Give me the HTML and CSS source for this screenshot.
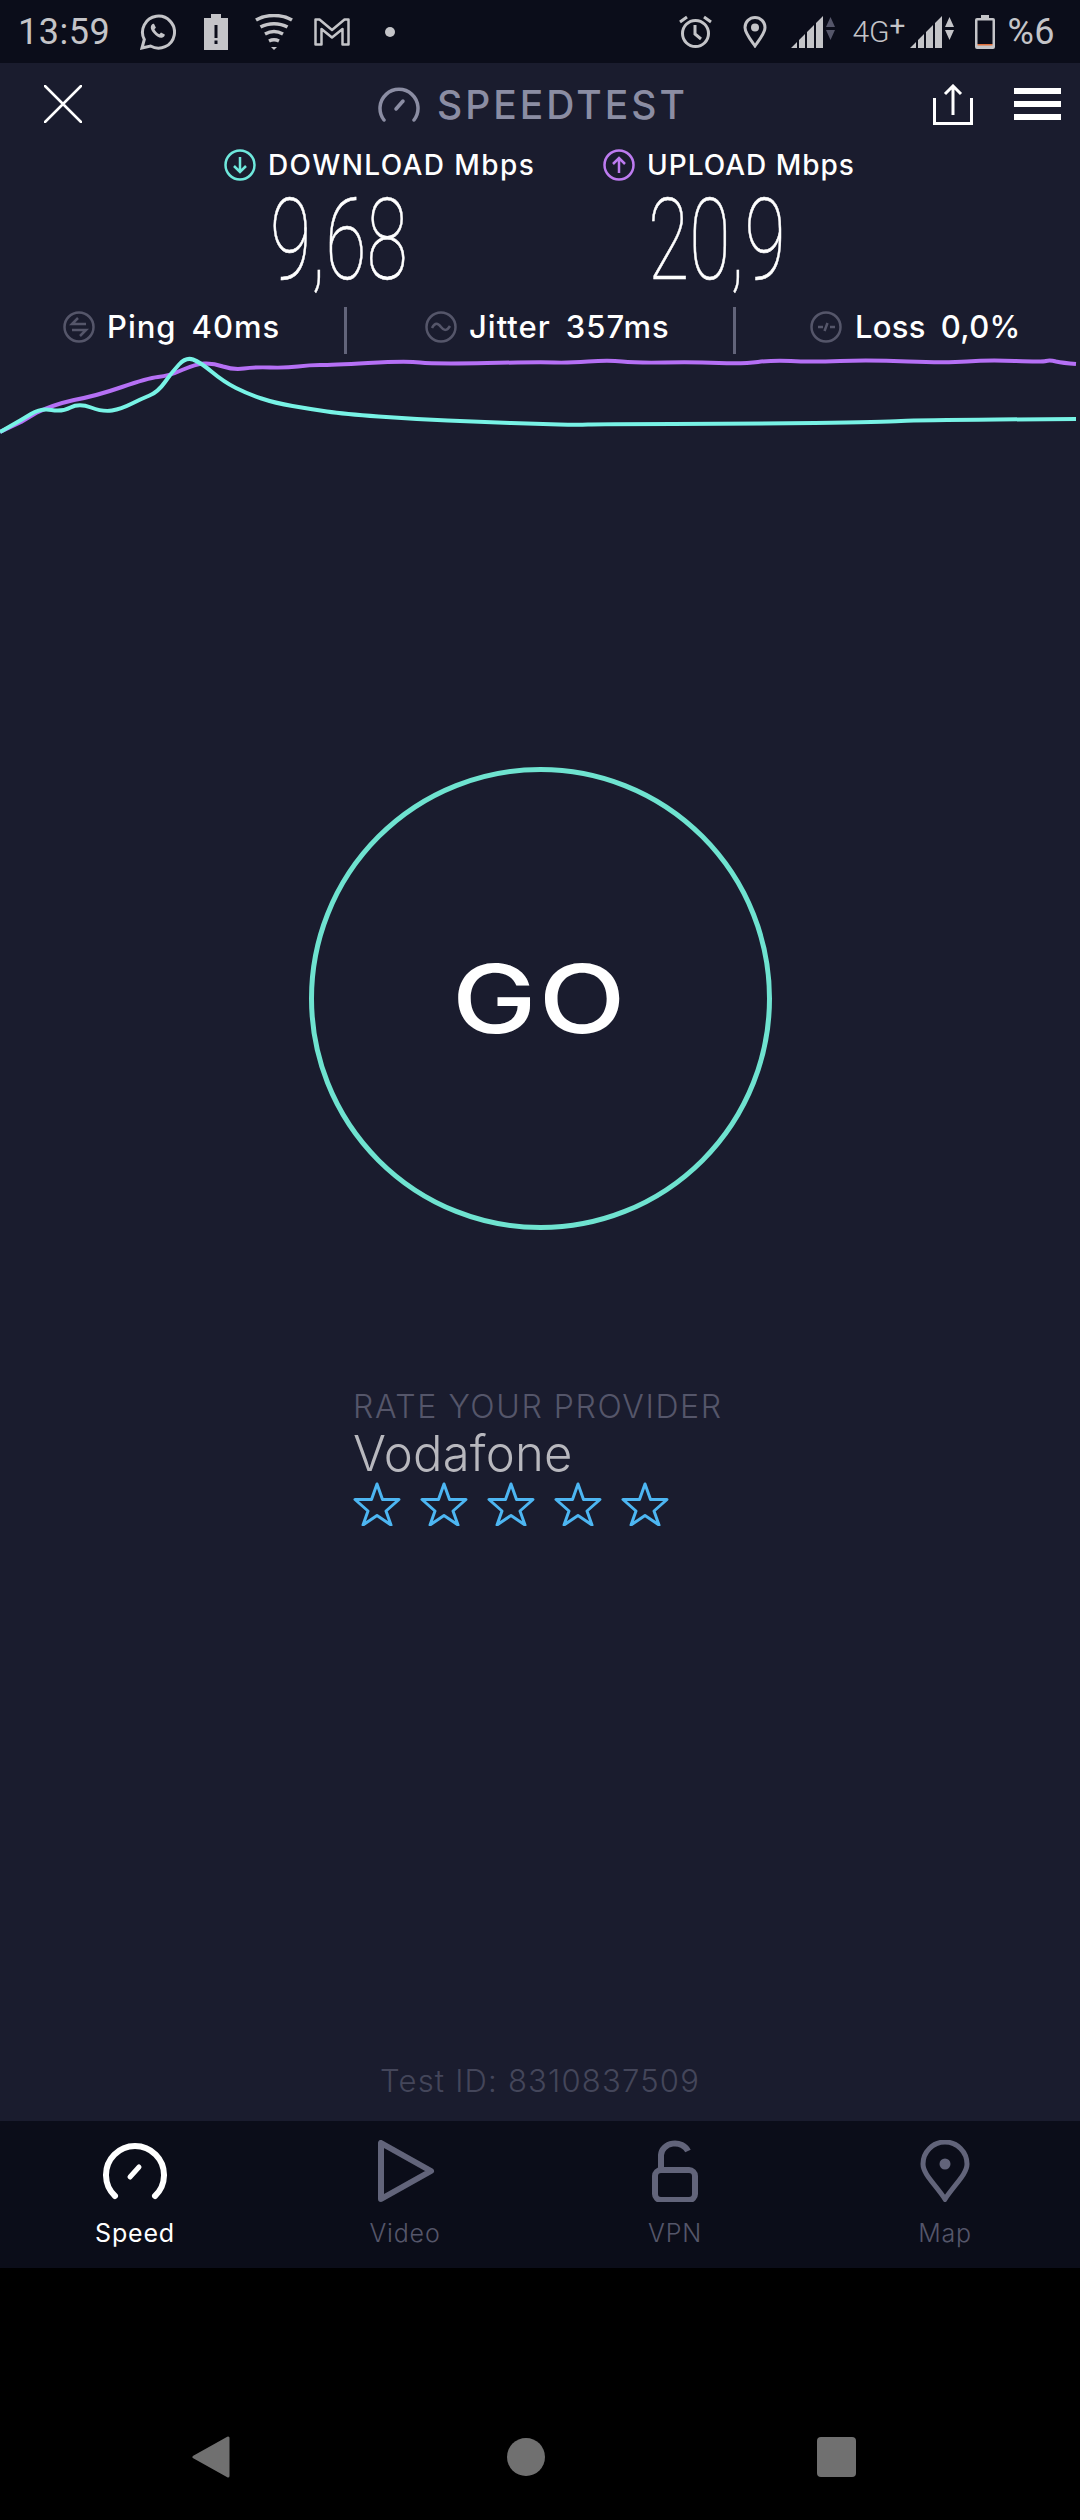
FILE: index.html
```html
<!DOCTYPE html>
<html lang="en">
<head>
    <meta charset="UTF-8">
    <title>Speedtest</title>
    <link rel="stylesheet" href="styles.css">
</head>
<body>
    <div class="status-bar">
        <span class="clock">13:59</span>
        <svg class="st-whatsapp" viewBox="0 0 36 36" fill="none" stroke="#c4c4c8" stroke-width="3"><path d="M2 34l2.300-8.500A16 16 0 1 1 10.500 32z"/><path d="M12 10.500c-2 2-1.500 5 1.500 8.500s6.500 5.500 9 4.500c1.500-.6 2.500-2 2.300-3l-3.800-2-1.600 1.800c-2-.8-4-2.800-5-5l1.500-1.600-1.800-3.800c-.8-.4-1.500-.4-2.100.6z" fill="#c4c4c8" stroke="none"/></svg>
        <svg class="st-alert" viewBox="0 0 24 36"><path fill="#c4c4c8" d="M0 4h7V0h10v4h7v32H0z"/><path fill="#0b0d1a" d="M10.500 11h3v13h-3zM10.500 26.500h3v3.500h-3z"/></svg>
        <svg class="st-wifi" viewBox="0 0 38 36" fill="none" stroke="#c4c4c8" stroke-width="3.500"><path d="M1 6c10-6 26-6 36 0"/><path d="M5.500 13c8-4.500 19-4.500 27 0"/><path d="M10 20c5.500-3 12.500-3 18 0"/><path d="M14 27c3-1.500 7-1.500 10 0"/><path d="M16 33h6l-3 3z" fill="#c4c4c8" stroke="none"/></svg>
        <svg class="st-gmail" viewBox="0 0 36 28" fill="none" stroke="#c4c4c8" stroke-width="2.500"><path d="M1.500 1.500h4L18 12 30.500 1.500h4v25h-6V11L18 19.500 7.500 11v15.500h-6z" stroke-linejoin="round"/></svg>
        <span class="st-dot"></span>
        <span class="status-right">
            <svg class="st-alarm" viewBox="0 0 33 33" fill="none" stroke="#c4c4c8" stroke-width="3"><circle cx="16.500" cy="18.500" r="13"/><path d="M16 10v9l6 5M1 7l7-5M32 7l-7-5"/></svg>
            <svg class="st-pin" viewBox="0 0 24 32" fill="none" stroke="#c4c4c8" stroke-width="3"><path d="M12 30C7 23 2 17 2 11.500a10 10 0 0 1 20 0C22 17 17 23 12 30z"/><circle cx="12" cy="11.500" r="4" fill="#c4c4c8" stroke="none"/></svg>
            <svg class="st-signal" viewBox="0 0 44 32"><path fill="#c4c4c8" d="M0 32l6-6v6zM8 32v-8l6-6v14zM16 32V16l7-7v23zM25 32V7l7-7v32z"/><path fill="#55566a" d="M39.500 1l4.500 10h-9zM35 14h9l-4.500 10z"/></svg>
            <span class="network">4G<sup>+</sup></span>
            <svg class="st-signal" viewBox="0 0 44 32"><path fill="#c4c4c8" d="M0 32l6-6v6zM8 32v-8l6-6v14zM16 32V16l7-7v23zM25 32V7l7-7v32z"/><path fill="#c4c4c8" d="M39.500 1l4.500 10h-9zM35 14h9l-4.500 10z"/></svg>
            <svg class="st-battery" viewBox="0 0 20 34"><path fill="#c4c4c8" d="M6 0h8v3h4a2 2 0 0 1 2 2v27a2 2 0 0 1-2 2H2a2 2 0 0 1-2-2V5a2 2 0 0 1 2-2h4z"/><path fill="#0b0d1a" d="M2.500 5.500h15V29h-15z"/><path fill="#e0703c" d="M2.500 29h15v1.500h-15z"/></svg>
            <span class="percent">%6</span>
        </span>
    </div>

    <main class="app">
        <div class="top-bar">
            <svg class="ic-close" viewBox="0 0 38 38" stroke="#fff" stroke-width="2.500" stroke-linecap="round"><path d="M1 1l36 36M37 1L1 37"/></svg>
            <div class="title">
                <svg class="ic-gauge" viewBox="0 0 42 36" fill="none" stroke="#8b8da3" stroke-width="3.500" stroke-linecap="round"><path d="M6 34A19 19 0 1 1 36 34"/><path d="M18 23l7-8"/></svg>
                <span>SPEEDTEST</span>
            </div>
            <svg class="ic-share" viewBox="0 0 40 41" fill="none" stroke="#fff" stroke-width="3"><path d="M1.500 14v25.500h37V14"/><path d="M20 31V3M12 10l8-8 8 8"/></svg>
            <div class="ic-menu"><i></i><i></i><i></i></div>
        </div>

        <div class="speed-labels">
            <svg class="ic-round" viewBox="0 0 32 32" fill="none" stroke="#6fe8dc" stroke-width="2.500"><circle cx="16" cy="16" r="14.500"/><path d="M16 8v15M10 17l6 6 6-6"/></svg>
            <span class="download-label">DOWNLOAD Mbps</span>
            <svg class="ic-round" viewBox="0 0 32 32" fill="none" stroke="#bd7bf0" stroke-width="2.500"><circle cx="16" cy="16" r="14.500"/><path d="M16 24V9M10 15l6-6 6 6"/></svg>
            <span class="upload-label">UPLOAD Mbps</span>
        </div>

        <div class="speed-values">
            <span class="value value-down">9,68</span>
            <span class="value value-up">20,9</span>
        </div>

        <div class="metrics">
            <svg class="ic-round" viewBox="0 0 32 32" fill="none" stroke="#55566a" stroke-width="2.500"><circle cx="16" cy="16" r="14.500"/><path d="M23 13H9l6-6M9 19h14l-6 6"/></svg>
            <span class="metric m-ping">Ping<b>40ms</b></span>
            <span class="sep sep-1"></span>
            <svg class="ic-round" viewBox="0 0 32 32" fill="none" stroke="#55566a" stroke-width="2.500"><circle cx="16" cy="16" r="14.500"/><path d="M7 17c3-6 6-5 9-1s6 4 9-1"/></svg>
            <span class="metric m-jitter">Jitter<b>357ms</b></span>
            <span class="sep sep-2"></span>
            <svg class="ic-round" viewBox="0 0 32 32" fill="none" stroke="#55566a" stroke-width="2.500"><circle cx="16" cy="16" r="14.500"/><path d="M8 16h5M14.500 20l3-8M20 16h5"/></svg>
            <span class="metric m-loss">Loss<b>0,0%</b></span>
        </div>

        <svg class="chart" viewBox="0 355 1080 95" fill="none" stroke-width="4" stroke-linejoin="round">
            <path stroke="#b570f5" d="M0 432L21 422 36 413Q52 405 74 400 96 396 122 387 148 378 158 377 169 376 182 370 196 364 204 363.500 213 363 223 366.500 234 370 244 368.500 255 367 270 367.500 286 368 298 366.500 310 365 320 365 331 365 368 363 406 361 420 362.500 434 364 487 363 540 362 554 362.500 568 363 588 361.500 609 360 622 361.500 636 363 665 362.500 695 362 719 363 743 364 758 362 774 360 791 361 809 362 840 361 871 360 908 361.500 946 363 967 361.500 988 360 1015 361 1043 362 1046 361 1050 360 1056 361.500 1063 363 1076 364"/>
            <path stroke="#78f3e6" d="M0 432L21 420 31 414Q41 408 51.500 410 62 412 70.500 407.500 79 403 91 407.500 103 412 112 410.500 121 409 131 404 141 399 149.500 395.500 158 392 165 382 172 372 179 364.500 186 357 193 359.500 200 362 212 372 224 382 236 388 248 394 261.500 398.500 275 403 292.500 406 310 409 327 411.500 344 414 378.500 416.500 413 419 447.500 420.500 482 422 511 423 540 424 559 424.500 578 425 588 424.500 599 424 673 424 747 424 815 423 884 422 901 421 919 420 997 419.500L1076 419"/>
        </svg>

        <div class="go-ring"><span>GO</span></div>

        <div class="rate">
            <div class="rate-label">RATE YOUR PROVIDER</div>
            <div class="provider">Vodafone</div>
            <div class="stars">
                <svg viewBox="0 0 48 44"><path d="M24 2l5.500 15.500H46L33 29l5 14-14-9.500L10 43l5-14L2 17.500h16.500z"/></svg>
                <svg viewBox="0 0 48 44"><path d="M24 2l5.500 15.500H46L33 29l5 14-14-9.500L10 43l5-14L2 17.500h16.500z"/></svg>
                <svg viewBox="0 0 48 44"><path d="M24 2l5.500 15.500H46L33 29l5 14-14-9.500L10 43l5-14L2 17.500h16.500z"/></svg>
                <svg viewBox="0 0 48 44"><path d="M24 2l5.500 15.500H46L33 29l5 14-14-9.500L10 43l5-14L2 17.500h16.500z"/></svg>
                <svg viewBox="0 0 48 44"><path d="M24 2l5.500 15.500H46L33 29l5 14-14-9.500L10 43l5-14L2 17.500h16.500z"/></svg>
            </div>
        </div>

        <div class="test-id">Test ID: 8310837509</div>
    </main>

    <nav class="tabs">
        <div class="tab active">
            <svg viewBox="0 0 64 62" fill="none" stroke="#fff" stroke-width="6" stroke-linecap="round"><path d="M12 56A29 29 0 1 1 52 56"/><path d="M27 37l9-10" stroke-width="5"/></svg>
            <span>Speed</span>
        </div>
        <div class="tab">
            <svg viewBox="0 0 64 62" fill="none" stroke="#62647a" stroke-width="6" stroke-linejoin="round"><path d="M8 3v56l50-28z"/></svg>
            <span>Video</span>
        </div>
        <div class="tab">
            <svg viewBox="0 0 64 62" fill="none" stroke="#62647a" stroke-width="6"><path d="M18 29V15a14 12 0 0 1 27-4" /><rect x="12" y="30" width="40" height="30" rx="6"/></svg>
            <span>VPN</span>
        </div>
        <div class="tab">
            <svg viewBox="0 0 64 62" fill="none" stroke="#62647a" stroke-width="5"><path d="M32 59C22 44 10 34 10 24a22 22 0 0 1 44 0C54 34 42 44 32 59z"/><circle cx="32" cy="24" r="5.500" fill="#62647a" stroke="none"/></svg>
            <span>Map</span>
        </div>
    </nav>

    <div class="system-nav">
        <svg class="sys-back" viewBox="0 0 38 42"><path fill="#707070" stroke="#707070" stroke-width="3" stroke-linejoin="round" d="M36 2v38L2 21z"/></svg>
        <span class="sys-home"></span>
        <span class="sys-recent"></span>
    </div>
</body>
</html>
```

FILE: styles.css
```css
* { box-sizing: border-box; }
html, body { margin: 0; padding: 0; }
body { width: 1080px; height: 2520px; overflow: hidden; background: #000; font-family: Inter, "Liberation Sans", sans-serif; display: flex; flex-direction: column; color: #fff; }
svg { display: block; flex: none; }

.status-bar { height: 63px; background: #0b0d1a; display: flex; align-items: center; padding-left: 18px; color: #c4c4c8; font-family: Roboto, sans-serif; }
.clock { font-size: 36px; width: 122px; letter-spacing: 0.5px; }
.st-whatsapp { width: 36px; height: 36px; margin-right: 28px; }
.st-alert { width: 24px; height: 36px; margin-right: 27px; }
.st-wifi { width: 38px; height: 36px; margin-right: 21px; }
.st-gmail { width: 36px; height: 28px; margin-right: 35px; }
.st-dot { width: 10px; height: 10px; border-radius: 50%; background: #c4c4c8; }
.status-right { margin-left: auto; display: flex; align-items: center; padding-right: 25px; }
.st-alarm { width: 33px; height: 33px; margin-right: 31px; }
.st-pin { width: 24px; height: 32px; margin-right: 24px; }
.st-signal { width: 44px; height: 32px; }
.network { font-size: 30px; width: 75px; padding-left: 17px; font-weight: 300; }
.network sup { font-size: 28px; font-weight: 400; line-height: 0; vertical-align: 7px; }
.st-battery { width: 20px; height: 34px; margin-left: 21px; margin-right: 12px; }
.percent { font-size: 36px; letter-spacing: 0.5px; }

.app { height: 2058px; flex: none; background: #1a1c2e; display: flex; flex-direction: column; }

.top-bar { height: 82px; flex: none; display: flex; align-items: center; padding-left: 44px; }
.ic-close { width: 38px; height: 38px; margin-right: 296px; }
.title { display: flex; align-items: center; width: 555px; color: #8b8da3; font-size: 39px; font-weight: 500; letter-spacing: 3px; }
.ic-gauge { width: 42px; height: 36px; margin-right: 17px; }
.ic-share { width: 40px; height: 41px; margin-right: 41px; }
.ic-menu { width: 47px; display: flex; flex-direction: column; gap: 7px; }
.ic-menu i { display: block; height: 6px; background: #fff; }

.speed-labels { height: 36px; margin-top: 2px; flex: none; display: flex; align-items: center; padding-left: 224px; font-size: 28px; font-weight: 500; letter-spacing: 1.4px; }
.ic-round { width: 32px; height: 32px; }
.download-label { margin-left: 12px; width: 335px; white-space: nowrap; }
.upload-label { margin-left: 12px; letter-spacing: 1px; }

.speed-values { height: 100px; margin-top: 7px; flex: none; display: flex; padding-left: 270px; }
.value { font-family: Roboto, sans-serif; font-weight: 100; font-size: 114px; line-height: 100px; -webkit-text-stroke: 0.6px #fff; transform: scaleX(0.66); transform-origin: left center; white-space: nowrap; }
.value-down { width: 378px; }

.metrics { height: 53px; margin-top: 10px; flex: none; display: flex; align-items: center; padding-left: 63px; font-size: 31px; font-weight: 500; letter-spacing: 1px; }
.metric { margin-left: 12px; white-space: nowrap; }
.metric b { font-weight: 500; margin-left: 15px; }
.m-ping { width: 237px; }
.m-jitter { width: 264px; }
.m-loss { margin-left: 13px; letter-spacing: 0.3px; }
.sep { width: 3px; height: 47px; margin-top: 7px; background: #62647a; }
.sep-1 { margin-right: 78px; }
.sep-2 { margin-right: 74px; }

.chart { width: 1080px; height: 95px; margin-top: 2px; }

.go-ring { width: 463px; height: 463px; flex: none; margin: 317px auto 0; border: 5px solid #6fe3d0; border-radius: 50%; display: flex; align-items: center; justify-content: center; font-size: 95px; font-weight: 500; letter-spacing: 2px; }
.go-ring span { transform: scaleX(1.19); }

.rate { margin: 157px 0 0 353px; }
.rate-label { font-size: 32px; line-height: 39px; font-weight: 300; letter-spacing: 1.6px; color: #55566a; white-space: nowrap; }
.provider { font-size: 49px; line-height: 56px; font-weight: 300; letter-spacing: 0.2px; color: #b8b8be; }
.stars { display: flex; gap: 19px; }
.stars svg { width: 48px; height: 44px; fill: none; stroke: #4db6f2; stroke-width: 3; stroke-linejoin: round; }

.test-id { margin-top: auto; padding-bottom: 20px; line-height: 40px; text-align: center; font-size: 31px; font-weight: 300; letter-spacing: 1.2px; color: #44465a; }

.tabs { height: 147px; flex: none; background: #0b0d19; display: grid; grid-template-columns: repeat(4, 270px); }
.tab { display: flex; flex-direction: column; align-items: center; padding-top: 19px; font-size: 25px; font-weight: 300; letter-spacing: 0.8px; color: #55566a; }
.tab svg { width: 64px; height: 62px; }
.tab span { margin-top: 16px; }
.tab.active { color: #fff; font-weight: 400; }

.system-nav { flex: 1; display: flex; align-items: flex-start; padding: 168px 0 0 192px; background: #000; }
.sys-back { width: 38px; height: 42px; margin-right: 277px; }
.sys-home { width: 38px; height: 38px; margin-top: 2px; border-radius: 50%; background: #707070; margin-right: 272px; }
.sys-recent { width: 39px; height: 40px; margin-top: 1px; border-radius: 4px; background: #707070; }
```
